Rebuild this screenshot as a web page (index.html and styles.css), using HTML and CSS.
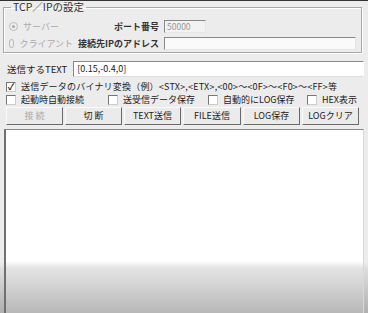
FILE: index.html
```html
<!DOCTYPE html>
<html lang="ja">
<head>
<meta charset="utf-8">
<link rel="stylesheet" href="styles.css">
</head>
<body>
<div class="topline"></div>
<fieldset class="group">
  <legend class="legend">TCP／IPの設定</legend>
  <div class="grid">
    <div class="radio"><span class="dot on"></span><span>サーバー</span></div>
    <div class="lbl">ポート番号</div>
    <div class="inp port">50000</div>
    <div class="radio"><span class="dot"></span><span>クライアント</span></div>
    <div class="lbl">接続先IPのアドレス</div>
    <div class="inp ip"></div>
  </div>
</fieldset>
<div class="send">
  <span class="send-lbl">送信するTEXT</span>
  <div class="send-inp">[0.15,-0.4,0]</div>
</div>
<div class="chk-row">
  <label class="chk"><span class="box checked">✓</span><span class="long">送信データのバイナリ変換（例）&lt;STX&gt;,&lt;ETX&gt;,&lt;00&gt;～&lt;0F&gt;～&lt;F0&gt;～&lt;FF&gt;等</span></label>
</div>
<div class="chk-row four">
  <label class="chk"><span class="box"></span><span>起動時自動接続</span></label>
  <label class="chk"><span class="box"></span><span>送受信データ保存</span></label>
  <label class="chk"><span class="box"></span><span>自動的にLOG保存</span></label>
  <label class="chk"><span class="box"></span><span>HEX表示</span></label>
</div>
<div class="buttons">
  <div class="btn disabled">接 続</div>
  <div class="btn">切 断</div>
  <div class="btn">TEXT送信</div>
  <div class="btn">FILE送信</div>
  <div class="btn">LOG保存</div>
  <div class="btn">LOGクリア</div>
</div>
<div class="log"></div>
</body>
</html>
```

FILE: styles.css
```css
html, body {
  margin: 0;
  padding: 0;
  height: 313px;
  overflow: hidden;
}
body {
  width: 368px;
  background: linear-gradient(to bottom, #ececec 0, #ececec 262px, #dcdcdc 270px, #b0b0b0 313px);
  font-family: "Noto Sans CJK JP", "Noto Sans", sans-serif;
  font-size: 9px;
  color: #222;
  display: flex;
  flex-direction: column;
  white-space: nowrap;
}
.topline {
  height: 1px;
  background: #333;
  flex: none;
}
.group {
  margin: 0 6px 0 3px;
  padding: 7px 5px 2px 4px;
  border: 1px solid #a8a8a8;
  box-shadow: inset 1px 1px 0 #fff, 1px 1px 0 #fff;
  flex: none;
  min-width: 0;
}
.legend {
  padding: 0 2px;
  margin-left: 3px;
  font-size: 10.5px;
  line-height: 12px;
  color: #333;
}
.grid {
  display: grid;
  grid-template-columns: minmax(0, 1fr) auto 192px;
  row-gap: 4px;
  column-gap: 5px;
  align-items: center;
}
.radio {
  display: flex;
  align-items: center;
  gap: 5px;
  color: #aaa;
  height: 13px;
  padding-left: 1px;
}
.dot {
  width: 7px;
  height: 7px;
  border-radius: 50%;
  border: 1px solid #bbb;
  background: #eee;
  position: relative;
}
.dot.on::after {
  content: "";
  position: absolute;
  left: 2px;
  top: 2px;
  width: 3px;
  height: 3px;
  border-radius: 50%;
  background: #aaa;
}
.lbl {
  text-align: right;
  font-weight: bold;
  color: #333;
}
.inp {
  height: 11px;
  border: 1px solid #888;
  border-right-color: #e6e6e6;
  border-bottom-color: #e6e6e6;
  background: #f2f2f2;
  font-size: 8.5px;
  line-height: 11px;
  padding-left: 2px;
  color: #999;
}
.port {
  width: 38px;
}
.ip {
  background: #fafafa;
}
.send {
  display: flex;
  align-items: center;
  gap: 6px;
  margin: 8px 4px 0 7px;
  flex: none;
}
.send-lbl {
  font-size: 9.5px;
}
.send-inp {
  flex: 1;
  height: 14px;
  line-height: 14px;
  background: #fff;
  border: 1px solid #888;
  border-right-color: #fff;
  border-bottom-color: #ddd;
  padding-left: 3px;
  font-size: 9px;
}
.chk-row {
  display: flex;
  margin: 3px 0 0 6px;
  height: 13px;
  align-items: center;
  flex: none;
}
.chk-row.four {
  margin-top: 0;
}
.chk-row.four .chk:nth-child(1) { width: 102px; }
.chk-row.four .chk:nth-child(2) { width: 100px; }
.chk-row.four .chk:nth-child(3) { width: 99px; }
.chk {
  display: flex;
  align-items: center;
  gap: 5px;
}
.long {
  letter-spacing: 0.2px;
}
.box {
  width: 8px;
  height: 8px;
  border: 1px solid #777;
  border-right-color: #ccc;
  border-bottom-color: #ccc;
  background: #fff;
  font-size: 9px;
  line-height: 8px;
  text-align: center;
  font-weight: bold;
  color: #222;
}
.buttons {
  display: grid;
  grid-template-columns: 57px 57px 57px 58px 57px 57px;
  column-gap: 2px;
  margin: 1px 0 0 6px;
  flex: none;
}
.btn {
  height: 16px;
  line-height: 16px;
  text-align: center;
  background: #ebebeb;
  border: 1px solid #fafafa;
  border-right: 1px solid #6a6a6a;
  border-bottom: 1px solid #6a6a6a;
  font-size: 9px;
  color: #222;
}
.btn.disabled {
  color: #aaa;
}
.log {
  flex: 1;
  margin: 4px 4px 0 4px;
  border-left: 2px solid #707070;
  border-top: 1px solid #888;
  border-right: 1px solid #d8d8d8;
  background: linear-gradient(to bottom, #fff 0, #fff 131px, #e4e4e4 138px, #b8b8b8 100%);
}
```
